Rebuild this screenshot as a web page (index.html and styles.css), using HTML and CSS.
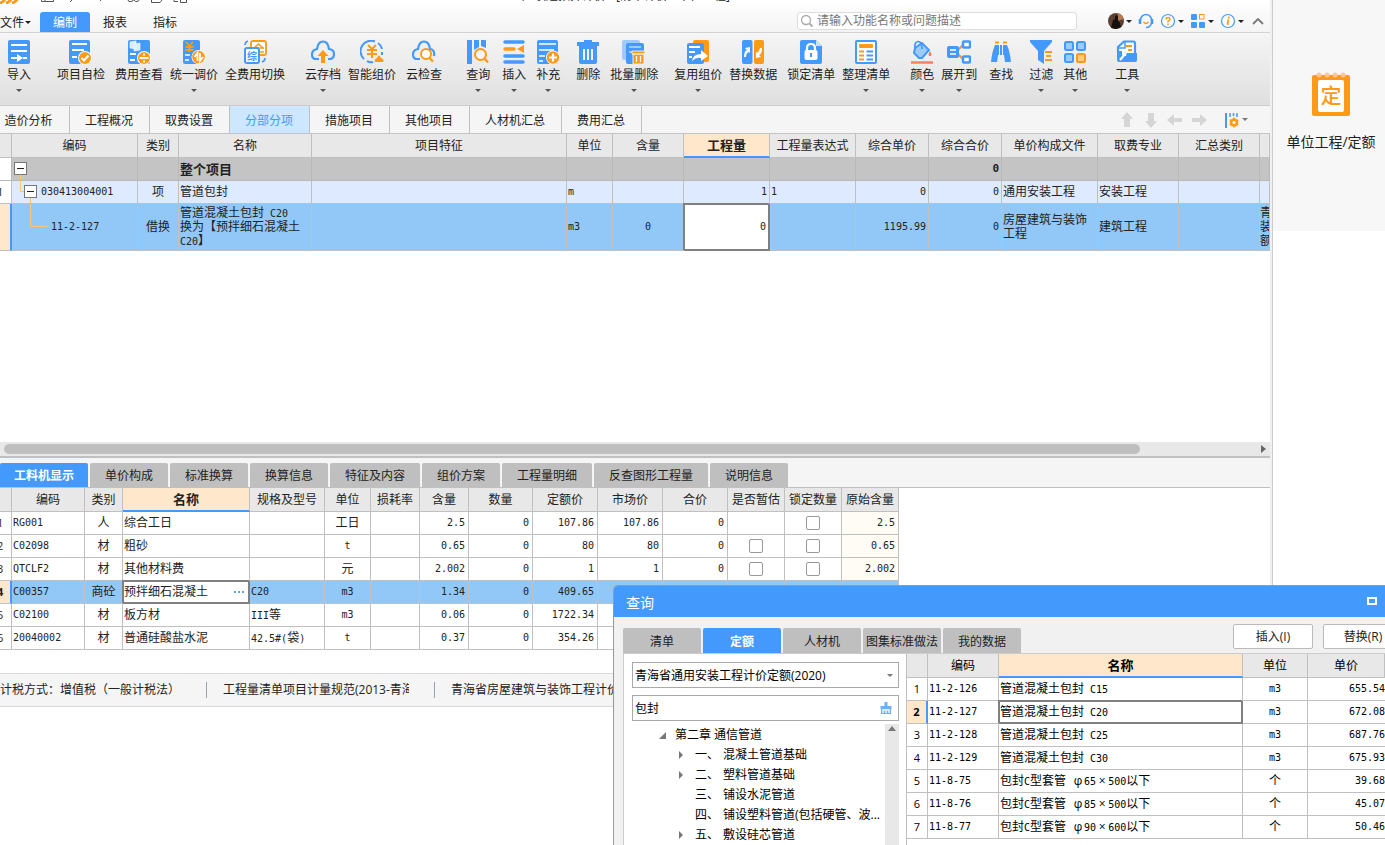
FILE: index.html
```html
<!DOCTYPE html>
<html lang="zh-CN">
<head>
<meta charset="utf-8">
<title>广联达预算计价</title>
<link rel="stylesheet" href="styles.css">
</head>
<body>
<div class="desktop">
<div class="app">
  <header class="titlebar">
    <svg class="logo" viewBox="0 0 20 10"><path d="M0 9Q5 8 6 1M6 9Q11 8 12.500 1M12 9Q17 8 19 1" fill="none" stroke="#ff9a17" stroke-width="3"/></svg>
    <svg class="quick" viewBox="0 0 170 4"><g fill="none" stroke="#555"><path d="M21.500 0V1.500H33.500V0M25 0V1.500M50 2L52 0M80 1L81 0M108 0Q108 2 111 1.500T113 0M114 0Q115 2 117 1.500T119 0M131.500 0V2.500H140L142 0M154 0V1.500H158M160.500 0V2.500H166.500V0"/></g></svg>
    <span class="title">广联达预算计价 - [清单计价 - 单位工程]</span>
  </header>
  <nav class="menubar">
    <button class="file">文件<i class="caret"></i></button>
    <button class="menu on">编制</button>
    <button class="menu">报表</button>
    <button class="menu">指标</button>
    <label class="search"><svg viewBox="0 0 14 14"><circle cx="6" cy="6" r="4.500" fill="none" stroke="#aaa" stroke-width="1.300"/><path d="M9.500 9.500L12.500 12.500" stroke="#aaa" stroke-width="1.800"/></svg><input type="text" aria-label="搜索" placeholder="请输入功能名称或问题描述"></label>
    <div class="account">
      <button aria-label="用户"><svg viewBox="0 0 16 16"><circle cx="8" cy="8" r="8" fill="#5c4034"/><path d="M8 0a8 8 0 0 1 7.500 6L10 8V2z" fill="#b87950"/><path d="M3 15L5 7l2-1V3l2-1 1 2v3l2 3 1 4-5 2z" fill="#15110f"/></svg><i class="caret"></i></button>
      <button aria-label="客服"><svg viewBox="0 0 16 16"><path d="M2.500 7a5.500 5.500 0 0 1 11 0" fill="none" stroke="#4499fd" stroke-width="1.500"/><path d="M2 6v5M14 6v5" fill="none" stroke="#4499fd" stroke-width="2.600"/><path d="M13.500 10q-1 4.500-5.500 4.500" fill="none" stroke="#4499fd" stroke-width="1.500"/><path d="M5.500 9q2.500 3 5 0" fill="none" stroke="#ff9a17" stroke-width="1.500"/></svg></button>
      <button aria-label="帮助"><svg viewBox="0 0 16 16"><circle cx="8" cy="8" r="6.500" fill="#fff" stroke="#4499fd" stroke-width="1.200"/><path d="M6 6.500Q6 4.500 8 4.500T10 6.300Q10 7.500 8 8.200V9.500M8 10.500V12" fill="none" stroke="#ff9a17" stroke-width="1.500"/></svg><i class="caret"></i></button>
      <button aria-label="应用"><svg viewBox="0 0 16 16"><g fill="#4499fd"><rect x="1" y="1" width="6" height="6" rx="1"/><rect x="1" y="9" width="6" height="6" rx="1"/><rect x="9" y="9" width="6" height="6" rx="1"/></g><rect x="9.500" y="1.500" width="4.500" height="4.500" fill="#fff" stroke="#ff9a17"/></svg><i class="caret"></i></button>
      <button aria-label="信息"><svg viewBox="0 0 16 16"><circle cx="8" cy="8" r="6.500" fill="#fff" stroke="#4499fd" stroke-width="1.200"/><path d="M8.700 3.500v2M8.300 6.500L7.500 12" stroke="#ff9a17" stroke-width="1.800"/></svg><i class="caret"></i></button>
      <button aria-label="收起"><svg viewBox="0 0 16 16"><path d="M3 11L8 6L13 11" fill="none" stroke="#777" stroke-width="1.800"/></svg></button>
    </div>
  </nav>

  <div class="ribbon">
    <button class="tool"><svg viewBox="0 0 24 24"><rect x="1" width="22" height="24" rx="2" fill="#4499fd"/><path d="M4 5H20M4 11H20M4 18H11M16 18H20" stroke="#fff" stroke-width="2"/><path d="M10 14l6 4-6 4z" fill="#fff"/></svg>导入<i class="caret"></i></button>
    <button class="tool s26"><svg viewBox="0 0 24 24"><rect width="21" height="24" rx="2" fill="#4499fd"/><path d="M3 4H18M3 10H15M3 17H8" stroke="#fff" stroke-width="2"/><circle cx="16" cy="18" r="7" fill="#fff"/><circle cx="16" cy="18" r="6" fill="#ff9a17"/><path d="M12.500 18L15 20.500L19.500 15.500" fill="none" stroke="#fff" stroke-width="2"/></svg>项目自检</button>
    <button class="tool s10"><svg viewBox="0 0 24 24"><rect x="1" width="22" height="24" rx="2" fill="#4499fd"/><path d="M3 2l6-1v8l-6-1zM7 4l6-1v7l-6 1z" fill="#d7eaff" stroke="#fff" stroke-width=".6"/><path d="M3 14H9M3 20H8" stroke="#fff" stroke-width="2"/><circle cx="17" cy="18" r="7" fill="#fff"/><circle cx="17" cy="18" r="6" fill="#ff9a17"/><path d="M12.500 18H21.500M17 13.500v2M17 20.500v2" stroke="#fff" stroke-width="1.800"/></svg>费用查看</button>
    <button class="tool s7"><svg viewBox="0 0 24 24"><rect x="1" width="17" height="24" rx="2" fill="#4499fd"/><path d="M4 2l3.500 4L11 2M7.500 6v6M3.500 7H11.500M3.500 10H11.500" fill="none" stroke="#ff9a17" stroke-width="1.800"/><path d="M3 15H8M3 20H7" stroke="#fff" stroke-width="1.500"/><circle cx="16.500" cy="17" r="7" fill="#fff"/><circle cx="16.500" cy="17" r="6.300" fill="#ff9a17"/><path d="M15.500 21V13l-3 4M18 13v8l3-4" fill="none" stroke="#fff" stroke-width="1.800"/></svg>统一调价<i class="caret"></i></button>
    <button class="tool s7"><svg viewBox="0 0 24 24"><rect x="8" y="1" width="15" height="14" rx="2" fill="#fff" stroke="#ff9a17" stroke-width="1.800"/><path d="M11 8L15.500 4L20 8M15.500 7v5M17 8H21M17 12H21" fill="none" stroke="#ff9a17" stroke-width="1.600"/><rect x="2" y="8" width="14" height="15" rx="2" fill="#fff" stroke="#4499fd" stroke-width="2"/><text x="9" y="19.500" class="glyph blue">综</text><path d="M2 5Q2 2 5 1M22 18Q22 21 19 22" fill="none" stroke="#4499fd" stroke-width="1.600"/></svg>全费用切换</button>
    <button class="tool s20"><svg viewBox="0 0 24 24"><path d="M8 19H5Q1 19 1 14.500T6 9Q7 1.500 12 1.500T18 9Q23 9.500 23 14T19 19H17" fill="none" stroke="#4499fd" stroke-width="2.200"/><path d="M12 10l5.500 6H14v7h-4v-7H6.500z" fill="#ff9a17"/></svg>云存档<i class="caret"></i></button>
    <button class="tool s7"><svg viewBox="0 0 24 24"><path d="M4 19A10.500 10.500 0 0 1 15 1.500M18 3Q21 5 22 9M22 12v3M7 21Q10 23 13 22" fill="none" stroke="#4499fd" stroke-width="2"/><path d="M8 5l4 4 4-4M12 9v9M7 10H17M7 14H17" fill="none" stroke="#ff9a17" stroke-width="2"/><path d="M15 22q-1-3 2-4 2-5 4 0 4 1 2 4z" fill="#ff9a17"/></svg>智能组价</button>
    <button class="tool s10"><svg viewBox="0 0 24 24"><path d="M8 19H5Q1 19 1 14.500T6 9Q7 1.500 12 1.500T18 9Q23 9.500 22 16" fill="none" stroke="#4499fd" stroke-width="2.200"/><circle cx="14" cy="14" r="5" fill="#fff" stroke="#ff9a17" stroke-width="2"/><path d="M17.500 18L21 21.500" stroke="#ff9a17" stroke-width="2.400"/></svg>云检查</button>
    <button class="tool s24"><svg viewBox="0 0 24 24"><path d="M1 0h5v24h-5zM8 0h5v7l-5 3zM15 0h5v8l-5-2z" fill="#4499fd"/><circle cx="14.500" cy="14.500" r="5.500" fill="#f6f6f6" stroke="#ff9a17" stroke-width="2"/><path d="M18.500 18.500L22 22.500" stroke="#ff9a17" stroke-width="2.400"/></svg>查询<i class="caret"></i></button>
    <button class="tool s12"><svg viewBox="0 0 24 24"><path d="M3 2H21M3 16H21M3 22H21" stroke="#4499fd" stroke-width="3.500" stroke-linecap="round"/><path d="M3 9H12" stroke="#ff9a17" stroke-width="3.500" stroke-linecap="round"/><path d="M22 5v8l-7-4z" fill="#ff9a17"/></svg>插入<i class="caret"></i></button>
    <button class="tool s10"><svg viewBox="0 0 24 24"><rect x="1" width="21" height="24" rx="2" fill="#4499fd"/><path d="M3 4H20M3 10H18M3 16H9M3 21H7" stroke="#fff" stroke-width="1.600"/><circle cx="17" cy="17.500" r="7" fill="#fff"/><circle cx="17" cy="17.500" r="6.200" fill="#ff9a17"/><path d="M13 17.500H21M17 13.500V21.500" stroke="#fff" stroke-width="2.200"/></svg>补充<i class="caret"></i></button>
    <button class="tool s16"><svg viewBox="0 0 24 24"><path d="M1 2h7V0h8v2h7v4H1zM3 6h18v16q0 2-2 2H5q-2 0-2-2z" fill="#4499fd"/><path d="M8 9V20M12 9V20M16 9V20" stroke="#fff" stroke-width="1.800"/></svg>删除</button>
    <button class="tool s10"><svg viewBox="0 0 24 24"><rect x="0" width="18" height="20" rx="2" fill="#9ccbff"/><rect x="4" y="3" width="18" height="21" rx="2" fill="#4499fd"/><path d="M7 7H19M7 12H12" stroke="#9ccbff" stroke-width="1.800"/><path d="M10 11h13v3H10zM11 14h11v10H11z" fill="#ff9a17" stroke="#fff" stroke-width=".8"/><path d="M14.500 16v6M18.500 16v6" stroke="#fff" stroke-width="1.300"/></svg>批量删除<i class="caret"></i></button>
    <button class="tool s16"><svg viewBox="0 0 24 24"><rect x="7" width="16" height="22" rx="2" fill="#ff9a17"/><rect x="1" y="3" width="17" height="21" rx="2" fill="#4499fd"/><path d="M3 7H14M3 12H9M3 17H6" stroke="#fff" stroke-width="1.800"/><path d="M6 21q1-7 9-7v-4l7 6-7 5v-3q-5-1-9 3z" fill="#fff"/></svg>复用组价<i class="caret"></i></button>
    <button class="tool s7"><svg viewBox="0 0 24 24"><rect x="1" width="10.500" height="24" rx="2" fill="#4499fd"/><rect x="13" width="10" height="24" rx="2" fill="#ff9a17"/><path d="M3 17q0-6 3-7l-2-2 5-1v6l-1-1q-3 1-3 5zM21 8q0 6-3 7l2 2-5 1v-6l1 1q2-1 3-5z" fill="#fff"/></svg>替换数据</button>
    <button class="tool s10"><svg viewBox="0 0 24 24"><path d="M3 0H17L23 6V22q0 2-2 2H3q-2 0-2-2V2q0-2 2-2" fill="#4499fd"/><path d="M17 0v6h6z" fill="#c9e2ff"/><path d="M8 11V8q0-4 4-4t4 4v3" fill="none" stroke="#fff" stroke-width="2.200"/><rect x="5.500" y="10" width="13" height="10" rx="2" fill="#fff"/><path d="M12 13v4" stroke="#4499fd" stroke-width="2"/></svg>锁定清单</button>
    <button class="tool s7"><svg viewBox="0 0 24 24"><rect x="2" y="1" width="20" height="22" rx="1" fill="#fff" stroke="#4499fd" stroke-width="2"/><rect x="5" y="4" width="14" height="4" rx="1" fill="#ff9a17"/><path d="M5 11.500H10M5 15.500H10M5 19.500H10" stroke="#ff9a17" stroke-width="1.800"/><path d="M12.500 11.500H19M12.500 15.500H19M12.500 19.500H19" stroke="#4499fd" stroke-width="1.800"/></svg>整理清单<i class="caret"></i></button>
    <button class="tool s20"><svg viewBox="0 0 24 24"><path d="M5 8L12 3L19 10L12 18H9L4 13z" fill="#9ccbff" stroke="#4499fd" stroke-width="2"/><path d="M5 10Q4 1.500 8 1.500T12 9" fill="none" stroke="#4499fd" stroke-width="1.700"/><path d="M20 11q-3 5 0 5t0-5" fill="#fb7858"/><path d="M1 22.500H23" stroke="#fb8060" stroke-width="2.500"/></svg>颜色<i class="caret"></i></button>
    <button class="tool s7"><svg viewBox="0 0 24 24"><path d="M11 10L16 5M11 14L16 19" stroke="#ff9a17" stroke-width="2"/><rect x="0" y="6" width="12" height="12" rx="2" fill="#4499fd"/><path d="M3 10H9M3 14H9" stroke="#fff" stroke-width="1.500"/><rect x="16" y="1.500" width="7" height="6" rx="1" fill="#fff" stroke="#4499fd" stroke-width="2.500"/><rect x="16" y="16.500" width="7" height="6" rx="1" fill="#fff" stroke="#4499fd" stroke-width="2.500"/></svg>展开到<i class="caret"></i></button>
    <button class="tool s12"><svg viewBox="0 0 24 24"><path d="M6 2.500H10M14 2.500H18" stroke="#ff9a17" stroke-width="2"/><path d="M6 5h4v10H9l-1 7H2q1-10 4-17M18 5h-4v10h1l1 7h6q-1-10-4-17" fill="#4499fd"/><path d="M12 5V15" stroke="#4499fd" stroke-width="2"/></svg>查找</button>
    <button class="tool s16"><svg viewBox="0 0 24 24"><path d="M1 0H23V2L15 11V24L9 20V11L1 2z" fill="#4499fd"/><path d="M16 12H23M17 16H22M16 20H23" stroke="#ff9a17" stroke-width="2"/></svg>过滤<i class="caret"></i></button>
    <button class="tool s10"><svg viewBox="0 0 24 24"><g fill="#9ccbff" stroke="#4499fd" stroke-width="2"><rect x="2" y="2" width="8" height="8" rx="1.500"/><rect x="14" y="2" width="8" height="8" rx="1.500"/><rect x="2" y="14" width="8" height="8" rx="1.500"/></g><rect x="14" y="14" width="8" height="8" rx="1.500" fill="#ffcc85" stroke="#ff9a17" stroke-width="2"/></svg>其他<i class="caret"></i></button>
    <button class="tool s28"><svg viewBox="0 0 24 24"><path d="M3 12V7L9 1.500H18q2 0 2 2V13" fill="#fff" stroke="#4499fd" stroke-width="2.200"/><path d="M10 2V8H4" fill="none" stroke="#4499fd" stroke-width="1.500"/><path d="M11 6H17M13 10H17" stroke="#ff9a17" stroke-width="1.800"/><path d="M2 11H8L11 13H22V20q0 2-2 2H4q-2 0-2-2z" fill="#4499fd"/><path d="M5 20L10 14" stroke="#fff" stroke-width="2.200"/><path d="M7 11v4l4 1 1-4-2 1-1-2z" fill="#fff"/></svg>工具<i class="caret"></i></button>
  </div>

  <div class="viewbar">
    <div class="views">
      <button class="first">造价分析</button><button>工程概况</button><button>取费设置</button><button class="on">分部分项</button><button>措施项目</button><button>其他项目</button><button class="wide">人材机汇总</button><button>费用汇总</button>
    </div>
    <div class="moves">
      <button aria-label="上移"><svg viewBox="0 0 16 16"><path d="M8 0l6 7H11v8H5V7H2z" fill="#d5d5d5"/></svg></button>
      <button aria-label="下移"><svg viewBox="0 0 16 16"><path d="M8 16l6-7H11V1H5v8H2z" fill="#d5d5d5"/></svg></button>
      <button aria-label="左移"><svg viewBox="0 0 16 16"><path d="M0 8l7-6v4h8v4H7v4z" fill="#d5d5d5"/></svg></button>
      <button aria-label="右移"><svg viewBox="0 0 16 16"><path d="M16 8l-7-6v4H1v4h8v4z" fill="#d5d5d5"/></svg></button>
      <button class="cols" aria-label="列设置"><svg viewBox="0 0 16 16"><path d="M2 1V16" stroke="#4499fd" stroke-width="2"/><path d="M6 1V5M9.500 1V4M13 1V5" stroke="#4499fd" stroke-width="1.500"/><circle cx="10" cy="10.500" r="3" fill="none" stroke="#ff9a17" stroke-width="2.500"/><path d="M10 5.500v10M5.700 8l8.600 5M14.300 8l-8.600 5" stroke="#ff9a17" stroke-width="1.500"/><circle cx="10" cy="10.500" r="1.500" fill="#fff"/></svg><i class="caret grey"></i></button>
    </div>
  </div>

  <div class="grid-area">
    <table class="grid main">
      <colgroup><col class="w12"><col class="w126"><col class="w41"><col class="w133"><col class="w255"><col class="w46"><col class="w71"><col class="w86"><col class="w86"><col class="w73"><col class="w73"><col class="w96"><col class="w81"><col class="w81"><col></colgroup>
      <thead><tr><th></th><th>编码</th><th>类别</th><th>名称</th><th>项目特征</th><th>单位</th><th>含量</th><th class="active">工程量</th><th>工程量表达式</th><th>综合单价</th><th>综合合价</th><th>单价构成文件</th><th>取费专业</th><th>汇总类别</th><th></th></tr></thead>
      <tbody>
        <tr class="total"><td class="no"></td><td class="tree"><div><svg width="24" height="22" viewBox="0 0 24 22"><path d="M8.500 17V22" stroke="#ffc56e"/><rect x="2.500" y="4.500" width="12" height="12" fill="#fff" stroke="#777"/><path d="M5 10.500H12" stroke="#222"/></svg></div></td><td></td><td>整个项目</td><td></td><td></td><td></td><td></td><td></td><td></td><td class="r n">0</td><td></td><td></td><td></td><td></td></tr>
        <tr class="item"><td class="no">1</td><td class="tree"><div><svg width="29" height="22" viewBox="0 0 29 22"><path d="M8.500 0V10.500H12M18.500 17V22" fill="none" stroke="#ffc56e"/><rect x="12.500" y="4.500" width="12" height="12" fill="#fff" stroke="#777"/><path d="M15 10.500H22" stroke="#222"/></svg><span class="n">030413004001</span></div></td><td class="c">项</td><td>管道包封</td><td></td><td class="n">m</td><td></td><td class="r n">1</td><td class="n">1</td><td class="r n">0</td><td class="r n">0</td><td>通用安装工程</td><td>安装工程</td><td></td><td></td></tr>
        <tr class="picked tall"><td class="no cur"></td><td class="tree"><div><svg width="39" height="46" viewBox="0 0 39 46"><path d="M18.500 0V22.500H35" fill="none" stroke="#ffc56e"/></svg><span class="n">11-2-127</span></div></td><td class="c">借换</td><td>管道混凝土包封<span class="n"> C20</span><br>换为【预拌细石混凝土<br><span class="n">C20</span>】</td><td></td><td class="n">m3</td><td class="c n">0</td><td class="r n edit">0</td><td></td><td class="r n">1195.99</td><td class="r n">0</td><td>房屋建筑与装饰工程</td><td>建筑工程</td><td></td><td class="cut">青装额</td></tr>
      </tbody>
    </table>
  </div>
  <div class="hscroll"><div class="thumb"></div><i></i></div>

  <div class="tabs lower">
    <button class="on w88">工料机显示</button><button>单价构成</button><button>标准换算</button><button>换算信息</button><button class="w90">特征及内容</button><button>组价方案</button><button class="w90">工程量明细</button><button class="w114">反查图形工程量</button><button>说明信息</button>
  </div>
  <div class="lower-area">
    <table class="grid res">
      <colgroup><col class="w12"><col class="w73"><col class="w38"><col class="w127"><col class="w75"><col class="w46"><col class="w49"><col class="w49"><col class="w64"><col class="w65"><col class="w65"><col class="w65"><col class="w57"><col class="w57"><col class="w57"></colgroup>
      <thead><tr><th></th><th>编码</th><th>类别</th><th class="active">名称</th><th>规格及型号</th><th>单位</th><th>损耗率</th><th>含量</th><th>数量</th><th>定额价</th><th>市场价</th><th>合价</th><th>是否暂估</th><th>锁定数量</th><th>原始含量</th></tr></thead>
      <tbody>
        <tr><td class="no">1</td><td class="n">RG001</td><td class="c">人</td><td>综合工日</td><td></td><td class="c">工日</td><td></td><td class="r n">2.5</td><td class="r n">0</td><td class="r n">107.86</td><td class="r n">107.86</td><td class="r n">0</td><td></td><td class="c"><input type="checkbox" aria-label="锁定数量 1"></td><td class="r n org">2.5</td></tr>
        <tr><td class="no">2</td><td class="n">C02098</td><td class="c">材</td><td>粗砂</td><td></td><td class="c n">t</td><td></td><td class="r n">0.65</td><td class="r n">0</td><td class="r n">80</td><td class="r n">80</td><td class="r n">0</td><td class="c"><input type="checkbox" aria-label="是否暂估 2"></td><td class="c"><input type="checkbox" aria-label="锁定数量 2"></td><td class="r n org">0.65</td></tr>
        <tr><td class="no">3</td><td class="n">QTCLF2</td><td class="c">材</td><td>其他材料费</td><td></td><td class="c">元</td><td></td><td class="r n">2.002</td><td class="r n">0</td><td class="r n">1</td><td class="r n">1</td><td class="r n">0</td><td class="c"><input type="checkbox" aria-label="是否暂估 3"></td><td class="c"><input type="checkbox" aria-label="锁定数量 3"></td><td class="r n org">2.002</td></tr>
        <tr class="picked"><td class="no cur">4</td><td class="n">C00357</td><td class="c">商砼</td><td class="edit"><div class="pick">预拌细石混凝土<button aria-label="选择"><svg viewBox="0 0 12 4"><path d="M1 1h2v2H1zM5 1h2v2H5zM9 1h2v2H9z" fill="#5aa6e4"/></svg></button></div></td><td class="n">C20</td><td class="c n">m3</td><td></td><td class="r n">1.34</td><td class="r n">0</td><td class="r n">409.65</td><td></td><td></td><td></td><td></td><td></td></tr>
        <tr><td class="no">5</td><td class="n">C02100</td><td class="c">材</td><td>板方材</td><td><span class="n">III</span>等</td><td class="c n">m3</td><td></td><td class="r n">0.06</td><td class="r n">0</td><td class="r n">1722.34</td><td></td><td></td><td></td><td></td><td></td></tr>
        <tr><td class="no">6</td><td class="n">20040002</td><td class="c">材</td><td>普通硅酸盐水泥</td><td><span class="n">42.5#(</span>袋<span class="n">)</span></td><td class="c n">t</td><td></td><td class="r n">0.37</td><td class="r n">0</td><td class="r n">354.26</td><td></td><td></td><td></td><td></td><td></td></tr>
      </tbody>
    </table>
  </div>
  <footer class="status"><span class="tax">计税方式：增值税（一般计税法）</span><span class="spec">工程量清单项目计量规范(2013-青海)</span><span class="quota">青海省房屋建筑与装饰工程计价定额(2020)</span></footer>
</div>

<aside class="side">
  <button><svg viewBox="0 0 40 44"><rect x="1" y="3" width="38" height="41" rx="2" fill="#ff9a17"/><rect x="7" y="8" width="26" height="32" rx="2" fill="#fff"/><g fill="#ffc98a"><circle cx="8" cy="3" r="2.500"/><circle cx="16" cy="3" r="2.500"/><circle cx="24" cy="3" r="2.500"/><circle cx="32" cy="3" r="2.500"/></g><text x="20" y="31" class="glyph big">定</text></svg>单位工程/定额</button>
</aside>
</div>

<section class="dialog" role="dialog" aria-label="查询">
  <header><span>查询</span><button aria-label="最大化"></button></header>
  <div class="dlg-bar">
    <div class="tabs"><button>清单</button><button class="on">定额</button><button>人材机</button><button>图集标准做法</button><button>我的数据</button></div>
    <div class="actions"><button>插入(I)</button><button>替换(R)</button></div>
  </div>
  <div class="dlg-body">
    <div class="picker">
      <div class="select"><select aria-label="定额库"><option>青海省通用安装工程计价定额(2020)</option></select><i class="caret grey"></i></div>
      <div class="keyword"><input type="text" aria-label="关键字" value="包封"><button aria-label="清除"><svg viewBox="0 0 14 14"><path d="M5.500 1H8.500V5H12.500V8H1.500V5H5.500z" fill="#70b0f8"/><path d="M2.500 8V12.500H11.500V8M5.500 12V10M8.500 12V10" fill="#d9eaff" stroke="#70b0f8" stroke-width="1.200"/></svg></button></div>
      <div class="tree-box">
        <ul>
          <li class="root"><i class="open"></i>第二章 通信管道</li>
          <li><i class="shut"></i><b>一、</b>混凝土管道基础</li>
          <li><i class="shut"></i><b>二、</b>塑料管道基础</li>
          <li><i></i><b>三、</b>铺设水泥管道</li>
          <li><i></i><b>四、</b>铺设塑料管道(包括硬管、波...</li>
          <li><i class="shut"></i><b>五、</b>敷设硅芯管道</li>
        </ul>
        <div class="vscroll"><i></i></div>
      </div>
    </div>
    <div class="results">
      <table class="grid found">
        <colgroup><col class="w21"><col class="w71"><col class="w244"><col class="w65"><col></colgroup>
        <thead><tr><th></th><th>编码</th><th class="active">名称</th><th>单位</th><th>单价</th></tr></thead>
        <tbody>
          <tr><td class="no">1</td><td class="n">11-2-126</td><td>管道混凝土包封<span class="n"> C15</span></td><td class="c n">m3</td><td class="r n">655.54</td></tr>
          <tr><td class="no cur">2</td><td class="n">11-2-127</td><td class="edit">管道混凝土包封<span class="n"> C20</span></td><td class="c n">m3</td><td class="r n">672.08</td></tr>
          <tr><td class="no">3</td><td class="n">11-2-128</td><td>管道混凝土包封<span class="n"> C25</span></td><td class="c n">m3</td><td class="r n">687.76</td></tr>
          <tr><td class="no">4</td><td class="n">11-2-129</td><td>管道混凝土包封<span class="n"> C30</span></td><td class="c n">m3</td><td class="r n">675.93</td></tr>
          <tr><td class="no">5</td><td class="n">11-8-75</td><td>包封<span class="n">C</span>型套管<span class="n"> </span><span class="sym">φ</span><span class="n">65</span><span class="sym">×</span><span class="n">500</span>以下</td><td class="c">个</td><td class="r n">39.68</td></tr>
          <tr><td class="no">6</td><td class="n">11-8-76</td><td>包封<span class="n">C</span>型套管<span class="n"> </span><span class="sym">φ</span><span class="n">85</span><span class="sym">×</span><span class="n">500</span>以下</td><td class="c">个</td><td class="r n">45.07</td></tr>
          <tr><td class="no">7</td><td class="n">11-8-77</td><td>包封<span class="n">C</span>型套管<span class="n"> </span><span class="sym">φ</span><span class="n">90</span><span class="sym">×</span><span class="n">600</span>以下</td><td class="c">个</td><td class="r n">50.46</td></tr>
        </tbody>
      </table>
    </div>
  </div>
</section>
</body>
</html>
```

FILE: styles.css
```css
* { box-sizing: border-box; }
body { margin: 0; background: #fff; color: #222; font: 12px/16px "Open Sans", "Noto Sans CJK SC", sans-serif; overflow: hidden; }
button { border: 0; padding: 0; margin: 0; background: none; color: inherit; font: inherit; white-space: nowrap; }
input, select { font: inherit; color: inherit; margin: 0; }
svg { display: block; flex: none; }
.desktop { display: flex; min-height: 100vh; }
.app { flex: 1; min-width: 0; overflow: hidden; }

.caret { display: inline-block; width: 0; height: 0; border: 3px solid transparent; border-top-color: #222; border-bottom: 0; }
.caret.grey { border-top-color: #777; }
.glyph { font: 700 10px "Noto Sans CJK SC", sans-serif; text-anchor: middle; fill: #ff9a17; }
.glyph.blue { fill: #4499fd; }
.glyph.big { font-size: 21px; font-weight: 500; }

/* title and menus */
.titlebar { height: 4px; overflow: hidden; display: flex; align-items: flex-end; background: #fff; }
.logo { width: 20px; height: 10px; }
.quick { width: 170px; height: 4px; }
.title { margin-left: 332px; line-height: 16px; height: 16px; white-space: nowrap; }
.menubar { display: flex; height: 29px; align-items: flex-end; background: linear-gradient(#fdfdfd, #f4f4f4); border-bottom: 1px solid #d2d2d2; }
.file { display: flex; align-items: center; gap: 1px; height: 20px; width: 40px; padding-top: 1px; overflow: hidden; }
.menu { width: 50px; height: 20px; padding-top: 1px; border-radius: 3px 3px 0 0; }
.menu.on { background: #4499fd; color: #fff; }
.search { display: flex; align-items: center; gap: 3px; width: 280px; height: 18px; margin: 0 0 2px auto; padding-left: 2px; background: #fff; border: 1px solid #ddd; border-radius: 3px; }
.search svg { width: 14px; height: 14px; }
.search input { flex: 1; border: 0; padding: 0; outline: 0; background: none; height: 16px; }
.search input::placeholder { color: #777; }
.account { display: flex; align-items: center; gap: 6px; margin: 0 4px 3px 31px; }
.account button { display: flex; align-items: center; gap: 2px; }
.account svg { width: 16px; height: 16px; }

/* ribbon */
.ribbon { display: flex; height: 73px; padding: 7px 0 0 7px; background: linear-gradient(#f5f5f5, #dfdfdf); border-bottom: 1px solid #ccc; }
.tool { display: flex; flex-direction: column; align-items: center; height: 56px; }
.tool svg { width: 24px; height: 24px; margin-bottom: 3px; }
.tool .caret { margin-top: 6px; border-top-color: #555; }
.s7 { margin-left: 7px; } .s10 { margin-left: 10px; } .s12 { margin-left: 12px; } .s16 { margin-left: 16px; }
.s20 { margin-left: 20px; } .s24 { margin-left: 24px; } .s26 { margin-left: 26px; } .s28 { margin-left: 28px; }

/* project views */
.viewbar { display: flex; justify-content: space-between; height: 28px; background: #f5f5f5; border-bottom: 1px solid #c4c4c4; }
.views { display: flex; }
.views button { width: 80px; border-right: 1px solid #c0c0c0; padding: 2px 1px 0 0; }
.views .first { width: 70px; padding-right: 12px; }
.views .wide { width: 92px; }
.views .on { background: #cce7ff; color: #4499fd; }
.moves { display: flex; align-items: center; gap: 8px; padding-right: 22px; }
.moves svg { width: 16px; height: 16px; }
.cols { display: flex; align-items: center; gap: 2px; margin-left: 9px; }

/* data grids */
.grid { table-layout: fixed; border-collapse: separate; border-spacing: 0; line-height: 14px; }
.grid th, .grid td { height: 23px; padding: 0 1px; border: 0 solid #c0c0c0; border-width: 0 1px 1px 0; overflow: hidden; }
.grid th { height: 24px; padding: 0; background: #e8e8e8; font-weight: 400; white-space: nowrap; }
.grid th.active { background: #ffe7cb; border-bottom: 2px solid #4499fd; font-size: 13px; font-weight: 700; }
.grid .n { font-family: "DejaVu Sans Mono", monospace; font-size: 10px; white-space: pre; }
.grid span.n { line-height: 12px; }
.grid .sym { display: inline-block; width: 12px; text-align: center; }
.grid .c { text-align: center; }
.grid .r { text-align: right; padding-right: 3px; }
.grid .no { padding: 0; background: #fff; font-size: 11px; text-indent: -3px; }
.grid .no.cur { background: #ffe7cb; border-right: 2px solid #4499fd; font-weight: 700; }
.grid .edit { background: #fff; border: solid #808080; border-width: 0 2px 2px 0; box-shadow: -1px -1px #808080, inset 1px 1px #808080; }
.main { width: 100%; }
.main .total td { background: #c4c4c4; border-color: #b8b8b8; font-size: 13px; font-weight: 700; }
.main .total td.n { font-size: 11px; }
.main .total td.no { background: #fff; }
.item td { background: #deeaff; }
.item td.no { background: #fff; }
.picked td { background: #92c8f7; }
.main .tall td { height: 47px; }
.main .tree { padding: 0; }
.tree div { display: flex; align-items: center; }
.main .r { padding-right: 2px; }
.main td.cut { padding: 0; }
.grid-area { min-height: 308px; }

.hscroll { display: flex; align-items: center; justify-content: space-between; height: 16px; padding: 0 4px; background: #e8e8e8; border-bottom: 2px solid #c0c0c0; }
.thumb { width: 90%; height: 10px; border-radius: 5px; background: #bfbfbf; }
.hscroll i { border: 4px solid transparent; border-left: 5px solid #666; border-right: 0; }

.tabs { display: flex; gap: 2px; }
.tabs button { width: 78px; height: 24px; padding-top: 2px; background: #bfbfbf; border-radius: 2px 2px 0 0; }
.tabs button.on { background: #4499fd; color: #fff; font-weight: 700; }
.lower { padding-top: 5px; background: #f5f5f5; border-bottom: 1px solid #c0c0c0; }
.tabs .w88 { width: 88px; } .tabs .w90 { width: 90px; } .tabs .w114 { width: 114px; }
.res { width: 899px; }
.res .org { background: #fffbf5; }
.res input { display: block; appearance: none; width: 14px; height: 14px; margin: 0 auto; border: 1px solid #999; border-radius: 2px; background: #fff; }
.lower-area { padding-bottom: 23px; }
.pick { display: flex; align-items: center; justify-content: space-between; padding-right: 2px; }
.pick svg { width: 12px; height: 4px; }

.status { display: flex; align-items: center; height: 34px; background: #f5f5f5; border: solid #d8d8d8; border-width: 1px 0; white-space: nowrap; }
.status span { padding-left: 16px; }
.status span + span { border-left: 1px solid #99a0b0; }
.status .tax { width: 206px; padding: 0; }
.status .spec { width: 203px; margin-right: 25px; overflow: hidden; }

/* library panel */
.side { width: 115px; padding-left: 1px; border-left: 2px solid #f0f0f0; box-shadow: inset 1px 0 #ccc; }
.side button { display: flex; flex-direction: column; align-items: center; gap: 16px; width: 100%; height: 231px; padding: 72px 0 0 4px; background: #f7f7f7; font-size: 14px; line-height: 20px; }
.side svg { width: 40px; height: 44px; }

/* query window */
.dialog { position: absolute; left: 613px; top: 585px; right: 0; bottom: 0; overflow: hidden; display: flex; flex-direction: column; background: #f1f1f1; border: solid #999; border-width: 1px 0 0 1px; border-radius: 5px 0 0 0; }
.dialog > header { display: flex; flex: none; align-items: center; justify-content: space-between; height: 31px; padding: 2px 8px 0 12px; background: #4499fd; color: #fff; font-size: 14px; }
.dialog > header button { width: 10px; height: 8px; margin-bottom: 4px; border: 2px solid #fff; }
.dlg-bar { display: flex; flex: none; height: 37px; margin-left: 9px; border-bottom: 1px solid #ccc; }
.dlg-bar .tabs { padding-top: 11px; }
.dlg-bar .tabs button { height: 25px; }
.actions { display: flex; gap: 10px; margin-left: auto; margin-right: -18px; padding-top: 7px; }
.actions button { width: 80px; height: 25px; background: #fff; border: 1px solid #bbb; border-radius: 2px; }
.dlg-body { display: flex; flex: 1; min-height: 0; margin-left: 9px; border-left: 1px solid #ccc; background: #fff; }
.picker { display: flex; flex-direction: column; gap: 7px; width: 282px; padding: 8px 7px 0 8px; }
.select, .keyword { display: flex; align-items: center; flex: none; height: 26px; padding: 0 5px 0 2px; border: 1px solid #aaa; background: #fff; color: #000; }
.select select, .keyword input { flex: 1; min-width: 0; border: 0; padding: 2px 0 0; appearance: none; outline: 0; background: none; }
.keyword svg { width: 14px; height: 14px; }
.tree-box { display: flex; flex: 1; min-height: 0; margin-top: -4px; color: #000; }
.tree-box ul { flex: 1; margin: 0; padding: 1px 0 0 44px; list-style: none; white-space: nowrap; overflow: hidden; }
.tree-box li { display: flex; align-items: center; height: 20px; }
.tree-box .root { margin-left: -20px; }
.tree-box i { width: 19px; flex: none; }
.tree-box i::before { content: ""; display: block; width: 0; margin-left: 3px; }
.tree-box .shut::before { border: 4px solid transparent; border-left-color: #777; border-right: 0; }
.tree-box .open::before { border-left: 7px solid transparent; border-bottom: 7px solid #777; }
.tree-box b { font-weight: 400; width: 28px; flex: none; }
.vscroll { width: 14px; background: #e8e8e8; padding: 2px 3px; }
.vscroll i::before { margin: 0; border: 4px solid transparent; border-top: 0; border-bottom: 5px solid #777; }
.results { flex: 1; min-width: 0; border-left: 1px solid #c0c0c0; }
.found { width: 100%; color: #000; }
.found .no { text-indent: 0; text-align: center; }
.found .r { padding-right: 0; border-right: 0; }

.w12 { width: 12px; } .w21 { width: 21px; } .w38 { width: 38px; } .w41 { width: 41px; } .w46 { width: 46px; } .w49 { width: 49px; }
.w57 { width: 57px; } .w64 { width: 64px; } .w65 { width: 65px; } .w71 { width: 71px; } .w73 { width: 73px; } .w75 { width: 75px; }
.w81 { width: 81px; } .w86 { width: 86px; } .w96 { width: 96px; } .w126 { width: 126px; } .w127 { width: 127px; } .w133 { width: 133px; }
.w244 { width: 244px; } .w255 { width: 255px; }
```
